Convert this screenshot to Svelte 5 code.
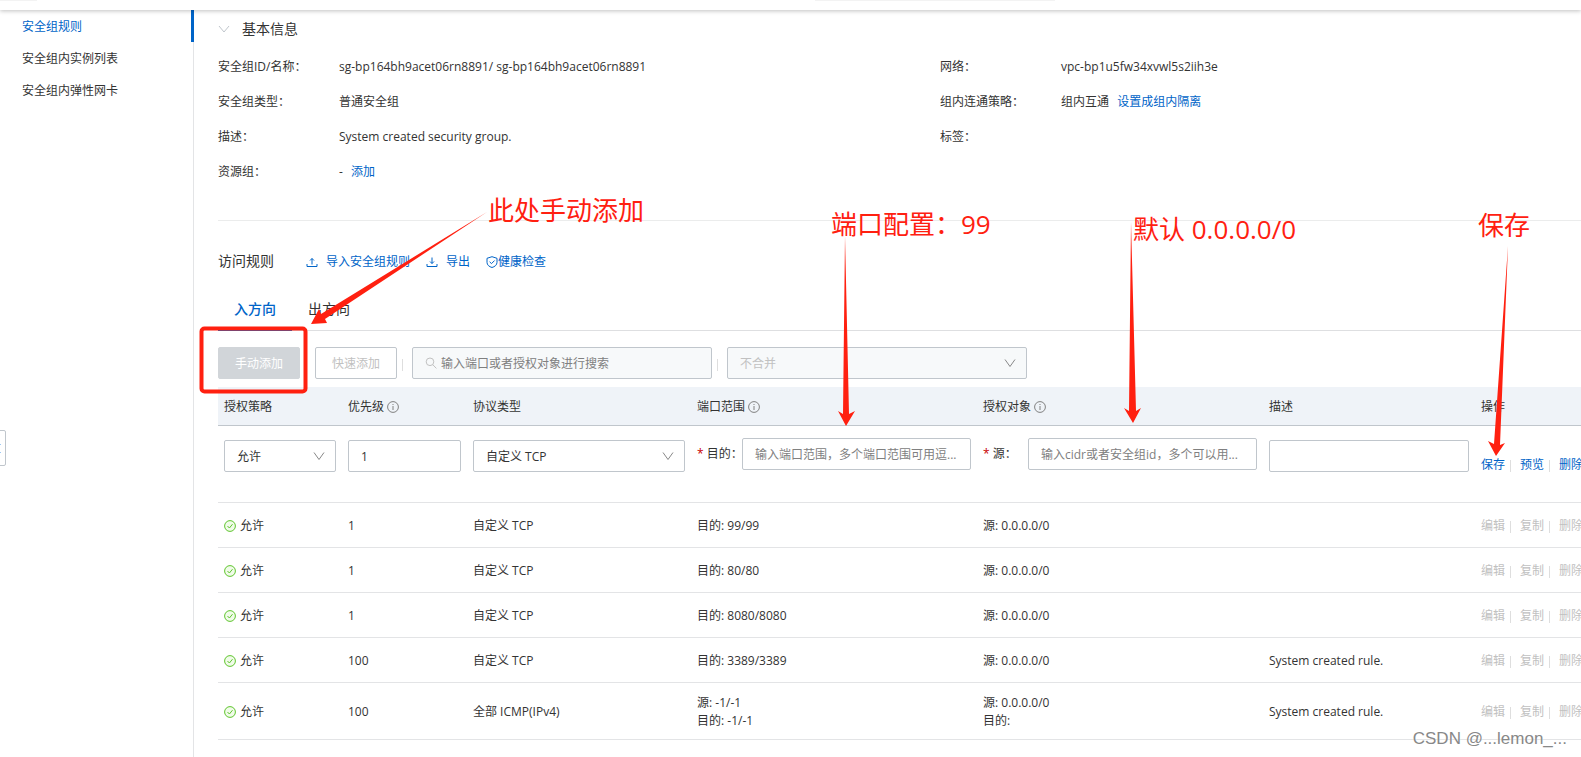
<script>
	let policy = '允许';
	let priority = '1';
	let protocol = '自定义 TCP';
	let port = '';
	let source = '';
	let description = '';
	let keyword = '';
	let merge = '不合并';
	let direction = '入方向';

	const menu = ['安全组规则', '安全组内实例列表', '安全组内弹性网卡'];
	const directions = ['入方向', '出方向'];

	const rules = [
		{ priority: 1, protocol: '自定义 TCP', ports: ['目的: 99/99'], targets: ['源: 0.0.0.0/0'], desc: '' },
		{ priority: 1, protocol: '自定义 TCP', ports: ['目的: 80/80'], targets: ['源: 0.0.0.0/0'], desc: '' },
		{ priority: 1, protocol: '自定义 TCP', ports: ['目的: 8080/8080'], targets: ['源: 0.0.0.0/0'], desc: '' },
		{ priority: 100, protocol: '自定义 TCP', ports: ['目的: 3389/3389'], targets: ['源: 0.0.0.0/0'], desc: 'System created rule.' },
		{
			priority: 100,
			protocol: '全部 ICMP(IPv4)',
			ports: ['源: -1/-1', '目的: -1/-1'],
			targets: ['源: 0.0.0.0/0', '目的:'],
			desc: 'System created rule.',
		},
	];
</script>

{#snippet chevron()}
	<svg class="chevron" viewBox="0 0 12 12" width="12" height="12"><path d="M1 2.5 6 9.5 11 2.5" /></svg>
{/snippet}

{#snippet info()}
	<svg class="info" viewBox="0 0 12 12" width="12" height="12">
		<circle cx="6" cy="6" r="5.4" />
		<path d="M6 5v4M6 3v1" />
	</svg>
{/snippet}

<div class="page">
	<header class="topbar"><i class="logo"></i><i class="search"></i></header>

	<div class="layout">
		<nav class="sidebar">
			{#each menu as item, i}
				<a href="#menu-{i}" class:active={i === 0}>{item}</a>
			{/each}
			<button class="handle" aria-label="收起"></button>
		</nav>

		<main class="content">
			<section class="basic">
				<h2>
					<svg viewBox="0 0 12 12" width="12" height="12"><path d="M1 3 6 9 11 3" /></svg>
					基本信息
				</h2>
				<div class="info-grid">
					<dl>
						<div><dt>安全组ID/名称：</dt><dd>sg-bp164bh9acet06rn8891/ sg-bp164bh9acet06rn8891</dd></div>
						<div><dt>安全组类型：</dt><dd>普通安全组</dd></div>
						<div><dt>描述：</dt><dd>System created security group.</dd></div>
						<div><dt>资源组：</dt><dd>- <a href="#add">添加</a></dd></div>
					</dl>
					<dl>
						<div><dt>网络：</dt><dd>vpc-bp1u5fw34xvwl5s2iih3e</dd></div>
						<div><dt>组内连通策略：</dt><dd>组内互通 <a href="#isolate">设置成组内隔离</a></dd></div>
						<div><dt>标签：</dt><dd></dd></div>
					</dl>
				</div>
			</section>

			<section class="rules">
				<div class="rules-head">
					<h2>访问规则</h2>
					<a href="#import">
						<svg viewBox="0 0 12 12" width="12" height="12"><path d="M1 8v2.500h10V8M6 8.500V2.500M4 4.500 6 2.500 8 4.500" /></svg>
						导入安全组规则
					</a>
					<a href="#export">
						<svg viewBox="0 0 12 12" width="12" height="12"><path d="M1 8v2.500h10V8M6 1.500v6M4 5.500 6 7.500 8 5.500" /></svg>
						导出
					</a>
					<a href="#check" class="check">
						<svg viewBox="0 0 12 12" width="12" height="12"><path d="M6 .7 11 2.300v4C11 9 8.800 10.700 6 11.500 3.200 10.700 1 9 1 6.300v-4zM3.600 5.800 5.500 7.600 8.600 4.500" /></svg>
						健康检查
					</a>
				</div>

				<div class="tabs" role="tablist">
					{#each directions as name}
						<button role="tab" aria-selected={direction === name} class:active={direction === name} on:click={() => (direction = name)}>{name}</button>
					{/each}
				</div>

				<div class="toolbar">
					<button class="btn primary" disabled>手动添加</button>
					<button class="btn" disabled>快速添加</button>
					<i class="bar"></i>
					<div class="field wide">
						<svg class="glass" viewBox="0 0 12 12" width="12" height="12"><circle cx="5" cy="4.8" r="3.8" /><path d="M7.7 7.6 11.4 11.4" /></svg>
						<input class="control has-icon" aria-label="搜索" placeholder="输入端口或者授权对象进行搜索" bind:value={keyword} disabled />
					</div>
					<i class="bar"></i>
					<div class="field wide">
						<select class="control" aria-label="合并" bind:value={merge} disabled>
							<option>不合并</option>
						</select>
						{@render chevron()}
					</div>
				</div>

				<table>
					<colgroup>
						<col class="c-policy" /><col class="c-priority" /><col class="c-protocol" /><col class="c-range" />
						<col class="c-range" /><col /><col class="c-actions" />
					</colgroup>
					<thead>
						<tr>
							<th>授权策略</th>
							<th>优先级 {@render info()}</th>
							<th>协议类型</th>
							<th>端口范围 {@render info()}</th>
							<th>授权对象 {@render info()}</th>
							<th>描述</th>
							<th>操作</th>
						</tr>
					</thead>
					<tbody>
						<tr class="edit">
							<td>
								<div class="field">
									<select class="control" aria-label="授权策略" bind:value={policy}><option>允许</option></select>
									{@render chevron()}
								</div>
							</td>
							<td><input class="control" aria-label="优先级" bind:value={priority} /></td>
							<td>
								<div class="field">
									<select class="control" aria-label="协议类型" bind:value={protocol}><option>自定义 TCP</option></select>
									{@render chevron()}
								</div>
							</td>
							<td class="labelled">
								<div>
									<label for="port"><b>*</b> 目的：</label>
									<input id="port" class="control" placeholder="输入端口范围，多个端口范围可用逗..." bind:value={port} />
								</div>
							</td>
							<td class="labelled">
								<div>
									<label for="source"><b>*</b> 源：</label>
									<input id="source" class="control" placeholder="输入cidr或者安全组id，多个可以用..." bind:value={source} />
								</div>
							</td>
							<td><input class="control" aria-label="描述" bind:value={description} /></td>
							<td class="ops">
								<div class="actions"><a href="#save">保存</a><a href="#preview">预览</a><a href="#delete">删除</a></div>
							</td>
						</tr>
						{#each rules as rule}
							<tr class:double={rule.ports.length > 1}>
								<td>
									<div class="allow">
										<svg viewBox="0 0 12 12" width="12" height="12"><circle cx="6" cy="6" r="5.4" /><path d="M3.5 6 5.4 8 8.5 4.2" /></svg>
										允许
									</div>
								</td>
								<td>{rule.priority}</td>
								<td>{rule.protocol}</td>
								<td>{#each rule.ports as line}<div>{line}</div>{/each}</td>
								<td>{#each rule.targets as line}<div>{line}</div>{/each}</td>
								<td>{rule.desc}</td>
								<td>
									<div class="actions"><button disabled>编辑</button><button disabled>复制</button><button disabled>删除</button></div>
								</td>
							</tr>
						{/each}
					</tbody>
				</table>
			</section>
		</main>
	</div>

	<!-- tutorial notes on top of the console -->
	<svg class="notes" width="1581" height="757" viewBox="0 0 1581 757">
		<rect x="201.5" y="328.5" width="104" height="63" rx="3" />
		<path d="M487 212 321 314 319 309 311 324 327 323 325 319Z" />
		<path d="M845 236 843 414 838 411 846 426 855 411 849 414Z" />
		<path d="M1131 222 1129 411 1124 408 1133 423 1141 408 1136 411Z" />
		<path d="M1508 246 1494 444 1488 441 1496 456 1505 443 1500 445Z" />
		<text x="488" y="220">此处手动添加</text>
		<text x="831" y="234">端口配置：99</text>
		<text x="1133" y="239">默认 0.0.0.0/0</text>
		<text x="1478" y="235">保存</text>
	</svg>
	<span class="watermark">CSDN @...lemon_...</span>
</div>

<style>
	:global(body) {
		margin: 0;
		background: #fff;
	}

	.page {
		position: relative;
		display: flex;
		flex-direction: column;
		min-height: 100vh;
		overflow: hidden;
		color: #333;
		font-family: 'Open Sans', 'Noto Sans CJK SC', sans-serif;
		font-size: 12px;
		line-height: 18px;
	}

	.page :is(input, select, button) {
		font-family: inherit;
		font-size: 12px;
	}

	a {
		color: #0064c8;
		text-decoration: none;
	}

	h2 {
		margin: 0;
		font-size: 14px;
		font-weight: 400;
		line-height: 22px;
	}

	svg {
		flex: none;
		fill: none;
		stroke: currentColor;
	}

	.topbar {
		position: relative;
		display: flex;
		justify-content: space-between;
		height: 10px;
		background: #fff;
		box-shadow: 0 1px 4px rgba(0, 0, 0, 0.25);
	}

	.topbar i {
		height: 1px;
		background: #f3f3f3;
	}

	.logo {
		width: 37px;
	}

	.search {
		width: 240px;
		margin-right: 33.3%;
	}

	.layout {
		display: flex;
		flex: 1;
	}

	.sidebar {
		flex: none;
		width: 193px;
		border-right: 1px solid #e3e4e6;
	}

	.sidebar a {
		display: block;
		margin-right: -1px;
		padding: 8px 22px 6px;
		border-right: 3px solid transparent;
		color: #333;
	}

	.sidebar a.active {
		border-right-color: #0064c8;
		color: #0064c8;
	}

	/* collapse handle, half of it sits off the left edge */
	.handle {
		position: absolute;
		top: 430px;
		left: -8px;
		width: 14px;
		height: 36px;
		padding: 0;
		border: 1px solid #c0c6cc;
		border-radius: 2px;
		background: #fff;
	}

	.handle::before {
		content: '';
		display: block;
		width: 8px;
		height: 7px;
		border: solid #9cc8f4;
		border-width: 1px 0;
	}

	/* the table needs this much room, narrower windows cut it on the right */
	.content {
		flex: 1 1 0;
		min-width: 1444px;
		padding: 8px 24px 0;
	}

	.basic {
		padding-bottom: 39px;
		border-bottom: 1px solid #ebecec;
	}

	.basic h2 {
		display: flex;
		align-items: center;
		gap: 12px;
		margin-bottom: 18px;
	}

	.basic h2 svg {
		color: #c0c6cc;
	}

	.info-grid {
		display: grid;
		grid-template-columns: 1fr 1fr;
	}

	dl {
		display: flex;
		flex-direction: column;
		gap: 17px;
		margin: 0;
	}

	dl div {
		display: flex;
		height: 18px;
	}

	dt {
		width: 121px;
	}

	dd {
		margin: 0;
	}

	dd a {
		margin-left: 5px;
	}

	.rules-head {
		display: flex;
		align-items: center;
		margin: 29px 0 16px;
	}

	.rules-head a {
		display: flex;
		align-items: center;
		gap: 8px;
		margin-right: 16px;
		padding-top: 2px;
	}

	.rules-head h2 {
		margin-right: 32px;
	}

	.rules-head .check {
		gap: 0;
	}

	.tabs {
		display: flex;
		border-bottom: 1px solid #dedfe1;
	}

	.tabs button {
		margin-bottom: -1px;
		padding: 10px 16px 9px;
		border: 0;
		border-bottom: 2px solid transparent;
		background: none;
		color: #333;
		font-size: 14px;
		line-height: 22px;
	}

	.tabs button.active {
		border-bottom-color: #0064c8;
		color: #0064c8;
		font-weight: 500;
	}

	.toolbar {
		display: flex;
		align-items: center;
		margin: 16px 0 8px;
	}

	.btn {
		width: 82px;
		height: 32px;
		padding: 0;
		border: 1px solid #c0c6cc;
		border-radius: 2px;
		background: #fff;
		color: #c1c1c1;
	}

	.btn.primary {
		margin-right: 15px;
		border-color: #d1d5d9;
		background: #d1d5d9;
		color: #fff;
	}

	.bar {
		width: 1px;
		height: 12px;
		margin: 4px 9px 0 5px;
		background: #dedede;
	}

	.field {
		position: relative;
	}

	.wide {
		width: 300px;
	}

	.control {
		box-sizing: border-box;
		display: block;
		width: 100%;
		height: 32px;
		padding: 0 12px;
		border: 1px solid #c0c6cc;
		border-radius: 2px;
		background: #fff;
		color: #333;
		appearance: none;
		outline: none;
	}

	.control:disabled {
		background: #f7f9fa;
		color: #c1c1c1;
		opacity: 1;
	}

	.control::placeholder {
		color: #808080;
	}

	.has-icon {
		padding-left: 28px;
	}

	.glass {
		position: absolute;
		top: 10px;
		left: 13px;
		color: #c1c1c1;
	}

	.chevron {
		position: absolute;
		top: 10px;
		right: 11px;
		color: #888;
		pointer-events: none;
	}

	table {
		width: 100%;
		border-spacing: 0;
		table-layout: fixed;
	}

	.c-policy {
		width: 124px;
	}

	.c-priority {
		width: 125px;
	}

	.c-protocol {
		width: 224px;
	}

	.c-range {
		width: 286px;
	}

	.c-actions {
		width: 187px;
	}

	th {
		padding: 11px 6px 9px;
		border-bottom: 1px solid #c0c6cc;
		background: #eff3f8;
		font-weight: 400;
		text-align: left;
	}

	.info {
		color: #808080;
		vertical-align: -2px;
	}

	td {
		padding: 14px 6px 12px;
		border-bottom: 1px solid #e3e4e6;
	}

	.double td {
		padding: 11px 6px 9px;
	}

	.edit td {
		padding: 14px 6px 30px;
		vertical-align: top;
	}

	.edit .labelled {
		padding-top: 12px;
	}

	.edit .ops {
		padding-top: 30px;
		padding-bottom: 0;
	}

	.labelled div {
		display: flex;
		align-items: center;
	}

	label {
		flex: none;
		width: 45px;
		white-space: nowrap;
	}

	label b {
		color: #c80000;
		font-weight: 400;
	}

	.labelled .control {
		flex: 1;
		min-width: 0;
	}

	.allow {
		display: flex;
		align-items: center;
		gap: 4px;
	}

	.allow svg {
		color: #5fc52e;
		fill: #f0fbe9;
	}

	.actions {
		display: flex;
		align-items: center;
	}

	.actions :is(a, button) {
		padding: 0;
		border: 0;
		background: none;
		line-height: 18px;
		white-space: nowrap;
	}

	.actions button {
		color: #c1c1c1;
	}

	.actions :not(:last-child)::after {
		content: '';
		display: inline-block;
		width: 1px;
		height: 12px;
		margin: 0 9px 0 5px;
		background: #dedede;
		vertical-align: -3px;
	}

	.notes {
		position: absolute;
		top: 0;
		left: 0;
		fill: #ff2010;
		stroke: none;
		font-size: 26px;
		pointer-events: none;
	}

	.notes rect {
		fill: none;
		stroke: #ff2010;
		stroke-width: 4px;
	}

	.watermark {
		position: absolute;
		right: 14px;
		bottom: 8px;
		color: #888;
		font-family: 'Liberation Sans', sans-serif;
		font-size: 17px;
		line-height: 20px;
		text-shadow: 0 0 2px #fff;
	}
</style>
